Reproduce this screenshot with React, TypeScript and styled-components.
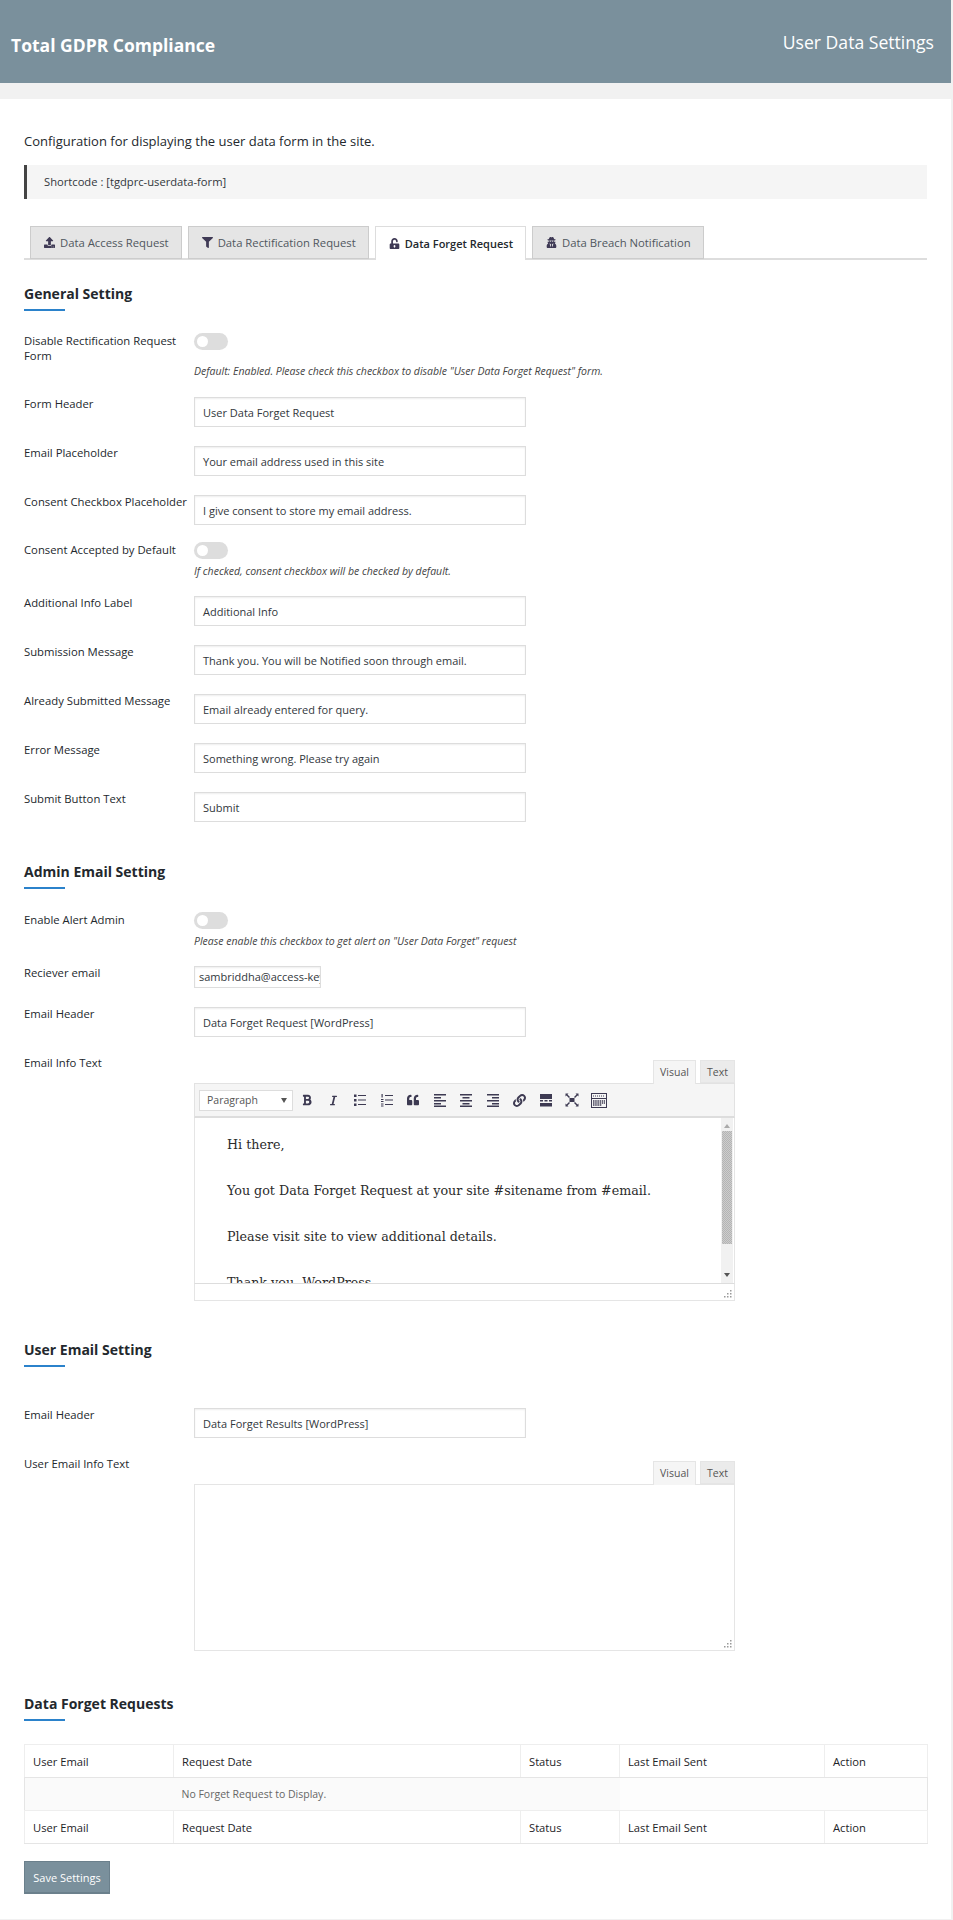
import React from 'react';
import styled, { createGlobalStyle } from 'styled-components';
import { FaUpload, FaFilter, FaUnlockAlt, FaUserSecret, FaBold, FaItalic, FaQuoteLeft, FaLink } from 'react-icons/fa';

const GlobalStyle = createGlobalStyle`
  html, body {
    margin: 0;
    padding: 0;
    background: #f1f1f1;
  }
  body {
    min-height: 1920px;
    font-family: 'Open Sans', 'Liberation Sans', sans-serif;
    font-size: 12px;
    color: #23282d;
  }
  * {
    box-sizing: border-box;
  }
`;

const Page = styled.div`
  width: 951px;
`;

const TopBar = styled.header`
  height: 83px;
  background: #7a909c;
  color: #fff;
  display: flex;
  justify-content: space-between;
  padding: 0 17px 0 11px;
`;

const PluginName = styled.div`
  font-size: 17.5px;
  font-weight: 700;
  line-height: 24px;
  margin-top: 33px;
`;

const PageName = styled.div`
  font-size: 17.6px;
  font-weight: 400;
  line-height: 24px;
  margin-top: 30px;
`;

const Band = styled.div`
  height: 16px;
  background: #f1f1f1;
`;

const Main = styled.main`
  background: #fff;
  padding: 32px 24px 25px;
`;

const Intro = styled.p`
  margin: 0;
  font-size: 13px;
  line-height: 20px;
  color: #23282d;
`;

const Shortcode = styled.div`
  margin-top: 14px;
  height: 34px;
  line-height: 34px;
  background: #f5f5f5;
  border-left: 3px solid #444;
  padding-left: 17px;
  font-size: 11.2px;
  color: #32373c;
`;

const Tabs = styled.nav`
  margin-top: 27px;
  height: 34px;
  display: flex;
  gap: 6px;
  padding-left: 6px;
  border-bottom: 2px solid #ddd;
`;

const Tab = styled.div<{ $active?: boolean }>`
  height: ${(p) => (p.$active ? '34px' : '33px')};
  display: flex;
  align-items: center;
  gap: 5px;
  padding: 0 12px 0 13px;
  font-size: ${(p) => (p.$active ? '11px' : '11.3px')};
  font-weight: ${(p) => (p.$active ? 600 : 400)};
  color: ${(p) => (p.$active ? '#23282d' : '#50575e')};
  background: ${(p) => (p.$active ? '#fff' : '#e5e5e5')};
  border: 1px solid #ccc;
  border-bottom: ${(p) => (p.$active ? 'none' : '1px solid #ccc')};
  border-color: ${(p) => (p.$active ? '#ddd' : '#ccc')};

  svg {
    font-size: 11px;
    color: #3f3a55;
    flex: none;
  }
`;

const Heading = styled.h2<{ $top: number }>`
  margin: ${(p) => p.$top}px 0 0;
  font-size: 14px;
  font-weight: 700;
  line-height: 22px;
  padding-bottom: 4px;
  color: #23282d;
  position: relative;

  &::after {
    content: '';
    position: absolute;
    left: 0;
    bottom: -2px;
    width: 41px;
    height: 2px;
    background: #2b82cb;
  }
`;

const Row = styled.div<{ $top?: number; $bottom?: number }>`
  display: grid;
  grid-template-columns: 170px 1fr;
  margin-top: ${(p) => p.$top ?? 0}px;
  margin-bottom: ${(p) => p.$bottom ?? 18}px;
`;

const Label = styled.label`
  font-size: 11.3px;
  line-height: 15px;
  color: #23282d;
  font-weight: 400;
  padding-right: 2px;
`;

const TextInput = styled.div<{ $short?: boolean }>`
  margin-top: 1px;
  width: ${(p) => (p.$short ? '127px' : '332px')};
  height: ${(p) => (p.$short ? '22px' : '30px')};
  line-height: ${(p) => (p.$short ? '20px' : '29px')};
  padding: 0 ${(p) => (p.$short ? '4px' : '8px')};
  border: 1px solid #ddd;
  box-shadow: inset 0 1px 2px rgba(0, 0, 0, 0.07);
  background: #fff;
  font-size: 11px;
  color: #32373c;
  white-space: nowrap;
  overflow: hidden;
`;

const Switch = styled.span`
  display: block;
  position: relative;
  width: 34px;
  height: 17px;
  border-radius: 9px;
  background: #ddd;

  &::before {
    content: '';
    position: absolute;
    left: 3px;
    top: 3px;
    width: 11px;
    height: 11px;
    border-radius: 50%;
    background: #fff;
  }
`;

const Hint = styled.div<{ $gap: number }>`
  margin-top: ${(p) => p.$gap}px;
  font-size: 10.5px;
  line-height: 15px;
  font-style: italic;
  color: #444;
  white-space: nowrap;
`;

const Editor = styled.div`
  margin-top: 5px;
  width: 541px;
`;

const ModeTabs = styled.div`
  display: flex;
  justify-content: flex-end;
  gap: 4px;
  height: 23px;
  position: relative;
  z-index: 1;
`;

const ModeTab = styled.div<{ $active?: boolean }>`
  height: ${(p) => (p.$active ? '24px' : '23px')};
  width: ${(p) => (p.$active ? '43px' : '35px')};
  text-align: center;
  line-height: 22px;
  font-size: 10.5px;
  color: #555;
  background: ${(p) => (p.$active ? '#f5f5f5' : '#ebebeb')};
  border: 1px solid #e5e5e5;
  border-bottom: ${(p) => (p.$active ? 'none' : '1px solid #e5e5e5')};
`;

const Toolbar = styled.div`
  height: 35px;
  background: #f5f5f5;
  border: 1px solid #e2e2e2;
  border-bottom: 2px solid #ddd;
  display: flex;
  align-items: center;
  padding-left: 4px;
`;

const FormatSelect = styled.div`
  width: 94px;
  height: 21px;
  background: #fff;
  border: 1px solid #ddd;
  display: flex;
  align-items: center;
  justify-content: space-between;
  padding: 0 5px 0 7px;
  font-size: 10.5px;
  color: #555;
  margin-right: 1px;

  &::after {
    content: '';
    border-style: solid;
    border-width: 5px 3.5px 0;
    border-color: #555 transparent transparent;
  }
`;

const ToolButton = styled.span`
  width: 26.5px;
  display: flex;
  align-items: center;
  justify-content: center;
  color: #3d3a52;
  font-size: 13px;
`;

const EditorBody = styled.div`
  height: 165px;
  display: flex;
  border-left: 1px solid #e5e5e5;
  border-right: 1px solid #e5e5e5;
  overflow: hidden;
  background: #fff;
`;

const Letter = styled.div`
  flex: 1;
  padding: 14px 0 0 32px;
  font-family: 'DejaVu Serif', 'Liberation Serif', serif;
  font-size: 12.7px;
  line-height: 26px;
  color: #2b2b2b;

  p {
    margin: 0 0 20px;
  }
`;

const ScrollBar = styled.div`
  width: 12px;
  margin-right: 1px;
  background: #f1f1f1;
  display: flex;
  flex-direction: column;
  align-items: center;
  justify-content: space-between;
  padding: 6px 0;
`;

const ScrollArrow = styled.span<{ $down?: boolean }>`
  border-style: solid;
  border-width: ${(p) => (p.$down ? '4px 3.5px 0' : '0 3.5px 4px')};
  border-color: ${(p) => (p.$down ? '#555 transparent transparent' : 'transparent transparent #aaa')};
`;

const ScrollThumb = styled.span`
  width: 10px;
  height: 113px;
  margin-top: 3px;
  margin-bottom: auto;
  background: repeating-conic-gradient(#b4b4b4 0 25%, #cdcdcd 0 50%) 0 0 / 2px 2px;
`;

const StatusBar = styled.div`
  height: 18px;
  background: #fff;
  border: 1px solid #e5e5e5;
  border-top: 1px solid #ddd;
  display: flex;
  justify-content: flex-end;
  align-items: flex-end;
  padding: 0 2px 2px 0;
`;

const BlankArea = styled.div`
  height: 167px;
  background: #fff;
  border: 1px solid #e5e5e5;
  display: flex;
  justify-content: flex-end;
  align-items: flex-end;
  padding: 0 2px 2px 0;
`;

const Table = styled.table`
  margin-top: 25px;
  width: 903px;
  border-collapse: collapse;
  table-layout: fixed;
  border: 1px solid #e5e5e5;
`;

const HeadCell = styled.th`
  height: 33px;
  padding: 0 8px;
  border: 1px solid #eee;
  border-bottom-color: #e5e5e5;
  text-align: left;
  font-size: 11.2px;
  font-weight: 400;
  color: #1d2327;
`;

const EmptyCell = styled.td<{ $light?: boolean }>`
  height: 33px;
  padding: 0 8px;
  background: ${(p) => (p.$light ? '#fdfdfd' : '#fafafa')};
  font-size: 10.5px;
  color: #666;
`;

const SaveButton = styled.button`
  display: block;
  margin-top: 17px;
  width: 86px;
  height: 33px;
  padding: 0;
  background: #7a909c;
  border: 1px solid #6b808c;
  border-bottom: 2px solid #6b808c;
  color: #fff;
  font-family: inherit;
  font-size: 11px;
  font-weight: 400;
`;

const lineIcon = (body: React.ReactNode, w = 14, h = 14) => (
  <svg width={w} height={h} viewBox="0 0 14 14" fill="#3d3a52">
    {body}
  </svg>
);

const Grip = () => (
  <svg width="9" height="9" viewBox="0 0 9 9" fill="#999">
    <rect x="7" y="1" width="1.5" height="1.5" />
    <rect x="4" y="4" width="1.5" height="1.5" />
    <rect x="7" y="4" width="1.5" height="1.5" />
    <rect x="1" y="7" width="1.5" height="1.5" />
    <rect x="4" y="7" width="1.5" height="1.5" />
    <rect x="7" y="7" width="1.5" height="1.5" />
  </svg>
);

const toolIcons: React.ReactNode[] = [
  <FaBold key="b" size={12} />,
  <FaItalic key="i" size={11} />,
  lineIcon(
    <>
      <rect x="1" y="1.5" width="2.5" height="2.5" />
      <rect x="1" y="6" width="2.5" height="2.5" />
      <rect x="1" y="10.5" width="2.5" height="2.5" />
      <rect x="5" y="2" width="8" height="1" />
      <rect x="5" y="6.5" width="8" height="1" />
      <rect x="5" y="11" width="8" height="1" />
    </>,
  ),
  lineIcon(
    <>
      <rect x="1.5" y="1" width="1.2" height="3.5" />
      <rect x="1" y="6" width="2.5" height="1" />
      <rect x="1" y="8" width="2.5" height="1" />
      <rect x="1" y="10.5" width="2.5" height="1" />
      <rect x="1" y="12.5" width="2.5" height="1" />
      <rect x="5" y="2" width="8" height="1" />
      <rect x="5" y="6.5" width="8" height="1" />
      <rect x="5" y="11" width="8" height="1" />
    </>,
  ),
  <FaQuoteLeft key="q" size={12} />,
  lineIcon(
    <>
      <rect x="1" y="1" width="12" height="1.5" />
      <rect x="1" y="4" width="7" height="1.5" />
      <rect x="1" y="7" width="12" height="1.5" />
      <rect x="1" y="10" width="7" height="1.5" />
      <rect x="1" y="12.5" width="12" height="1.5" />
    </>,
  ),
  lineIcon(
    <>
      <rect x="1" y="1" width="12" height="1.5" />
      <rect x="3.5" y="4" width="7" height="1.5" />
      <rect x="1" y="7" width="12" height="1.5" />
      <rect x="3.5" y="10" width="7" height="1.5" />
      <rect x="1" y="12.5" width="12" height="1.5" />
    </>,
  ),
  lineIcon(
    <>
      <rect x="1" y="1" width="12" height="1.5" />
      <rect x="6" y="4" width="7" height="1.5" />
      <rect x="1" y="7" width="12" height="1.5" />
      <rect x="6" y="10" width="7" height="1.5" />
      <rect x="1" y="12.5" width="12" height="1.5" />
    </>,
  ),
  <FaLink key="l" size={13} />,
  lineIcon(
    <>
      <rect x="1" y="1" width="12" height="5" />
      <rect x="1" y="7" width="3" height="1.5" />
      <rect x="5.5" y="7" width="3" height="1.5" />
      <rect x="10" y="7" width="3" height="1.5" />
      <rect x="1" y="10" width="12" height="3.5" />
    </>,
  ),
  lineIcon(
    <>
      <rect x="4.5" y="5" width="5" height="4" />
      <path d="M0.5 0.5h3l-1 1 2.5 2.5-1 1-2.5-2.5-1 1zM13.5 0.5v3l-1-1-2.5 2.5-1-1 2.5-2.5-1-1zM0.5 13.5v-3l1 1 2.5-2.5 1 1-2.5 2.5 1 1zM13.5 13.5h-3l1-1-2.5-2.5 1-1 2.5 2.5 1-1z" />
    </>,
  ),
  <svg key="k" width="16" height="15" viewBox="0 0 16 15" fill="none" stroke="#3d3a52" strokeWidth="1">
    <rect x="0.5" y="0.5" width="15" height="14" />
    <path d="M2 3h12" strokeDasharray="1 1" />
    <path d="M0.5 5.5h15" />
    <path d="M2 8h12M2 10h12M2 12h9" strokeDasharray="1.5 0.7" strokeWidth="1.4" />
  </svg>,
];

const TabItems = [
  { name: 'Data Access Request', icon: <FaUpload /> },
  { name: 'Data Rectification Request', icon: <FaFilter /> },
  { name: 'Data Forget Request', icon: <FaUnlockAlt />, active: true },
  { name: 'Data Breach Notification', icon: <FaUserSecret /> },
];

const generalTop = [
  ['Form Header', 'User Data Forget Request'],
  ['Email Placeholder', 'Your email address used in this site'],
  ['Consent Checkbox Placeholder', 'I give consent to store my email address.'],
];

const generalBottom = [
  ['Additional Info Label', 'Additional Info'],
  ['Submission Message', 'Thank you. You will be Notified soon through email.'],
  ['Already Submitted Message', 'Email already entered for query.'],
  ['Error Message', 'Something wrong. Please try again'],
  ['Submit Button Text', 'Submit'],
];

const columns = [
  { name: 'User Email', width: 149 },
  { name: 'Request Date', width: 347 },
  { name: 'Status', width: 99 },
  { name: 'Last Email Sent', width: 205 },
  { name: 'Action', width: 103 },
];

function TableRow() {
  return (
    <tr>
      {columns.map((c) => (
        <HeadCell key={c.name} style={{ width: c.width }}>
          {c.name}
        </HeadCell>
      ))}
    </tr>
  );
}

function App(): JSX.Element {
  return (
    <Page>
      <GlobalStyle />
      <TopBar>
        <PluginName>Total GDPR Compliance</PluginName>
        <PageName>User Data Settings</PageName>
      </TopBar>
      <Band />
      <Main>
        <Intro>Configuration for displaying the user data form in the site.</Intro>
        <Shortcode>Shortcode : [tgdprc-userdata-form]</Shortcode>
        <Tabs>
          {TabItems.map((t) => (
            <Tab key={t.name} $active={t.active}>
              {t.icon}
              {t.name}
            </Tab>
          ))}
        </Tabs>

        <Heading $top={23}>General Setting</Heading>
        <Row $top={24} $bottom={17}>
          <Label>Disable Rectification Request Form</Label>
          <div>
            <Switch />
            <Hint $gap={14}>Default: Enabled. Please check this checkbox to disable "User Data Forget Request" form.</Hint>
          </div>
        </Row>
        {generalTop.map(([label, value]) => (
          <Row key={label}>
            <Label>{label}</Label>
            <TextInput>{value}</TextInput>
          </Row>
        ))}
        <Row $top={-1} $bottom={16}>
          <Label>Consent Accepted by Default</Label>
          <div>
            <Switch />
            <Hint $gap={5}>If checked, consent checkbox will be checked by default.</Hint>
          </div>
        </Row>
        {generalBottom.map(([label, value]) => (
          <Row key={label}>
            <Label>{label}</Label>
            <TextInput>{value}</TextInput>
          </Row>
        ))}

        <Heading $top={39}>Admin Email Setting</Heading>
        <Row $top={25} $bottom={16}>
          <Label>Enable Alert Admin</Label>
          <div>
            <Switch />
            <Hint $gap={5}>Please enable this checkbox to get alert on "User Data Forget" request</Hint>
          </div>
        </Row>
        <Row>
          <Label>Reciever email</Label>
          <TextInput $short>sambriddha@access-keys.com</TextInput>
        </Row>
        <Row>
          <Label>Email Header</Label>
          <TextInput>Data Forget Request [WordPress]</TextInput>
        </Row>
        <Row $bottom={0}>
          <Label>Email Info Text</Label>
          <Editor>
            <ModeTabs>
              <ModeTab $active>Visual</ModeTab>
              <ModeTab>Text</ModeTab>
            </ModeTabs>
            <Toolbar>
              <FormatSelect>Paragraph</FormatSelect>
              {toolIcons.map((icon, i) => (
                <ToolButton key={i}>{icon}</ToolButton>
              ))}
            </Toolbar>
            <EditorBody>
              <Letter>
                <p>Hi there,</p>
                <p>You got Data Forget Request at your site #sitename from #email.</p>
                <p>Please visit site to view additional details.</p>
                <p>Thank you, WordPress</p>
              </Letter>
              <ScrollBar>
                <ScrollArrow />
                <ScrollThumb />
                <ScrollArrow $down />
              </ScrollBar>
            </EditorBody>
            <StatusBar>
              <Grip />
            </StatusBar>
          </Editor>
        </Row>

        <Heading $top={38}>User Email Setting</Heading>
        <Row $top={42}>
          <Label>Email Header</Label>
          <TextInput>Data Forget Results [WordPress]</TextInput>
        </Row>
        <Row $bottom={0}>
          <Label>User Email Info Text</Label>
          <Editor>
            <ModeTabs>
              <ModeTab $active>Visual</ModeTab>
              <ModeTab>Text</ModeTab>
            </ModeTabs>
            <BlankArea>
              <Grip />
            </BlankArea>
          </Editor>
        </Row>

        <Heading $top={42}>Data Forget Requests</Heading>
        <Table>
          <thead>
            <TableRow />
          </thead>
          <tbody>
            <tr>
              <EmptyCell />
              <EmptyCell colSpan={2}>No Forget Request to Display.</EmptyCell>
              <EmptyCell $light colSpan={2} />
            </tr>
          </tbody>
          <tfoot>
            <TableRow />
          </tfoot>
        </Table>
        <SaveButton>Save Settings</SaveButton>
      </Main>
    </Page>
  );
}

export default App;
